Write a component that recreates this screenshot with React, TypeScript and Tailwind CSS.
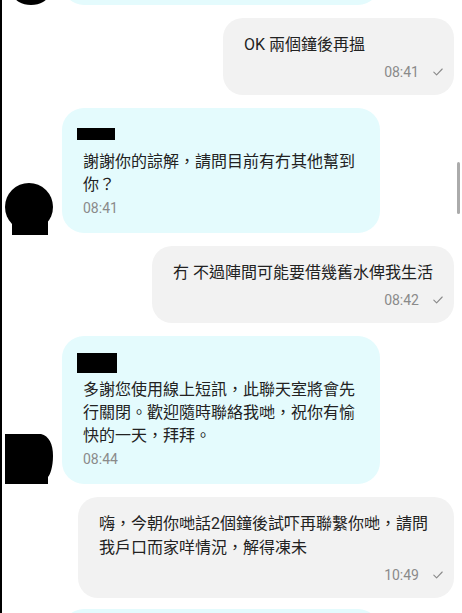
import React from 'react'

const font = "font-['Roboto','Noto_Sans_CJK_TC',sans-serif]"

function Check() {
  return (
    <svg width="10" height="8" viewBox="0 0 10 8" fill="none">
      <polyline points="0.8,4.2 3.6,6.9 9.2,1" stroke="#8a8a8a" strokeWidth="1.1" strokeLinecap="round" strokeLinejoin="round" />
    </svg>
  )
}

function Outgoing({ text, time }: { text: string; time: string }) {
  return (
    <div className="mr-[8px] min-w-[231px] max-w-[376px] self-end rounded-[20px] bg-[#f2f2f2] px-[21px] pt-[15px] pb-[14px]">
      <p className="text-[16px] leading-[24px] text-[#222]">{text}</p>
      <div className="-mr-[10px] mt-[6px] flex h-[18px] items-center justify-end gap-[14px]">
        <span className="text-[14px] text-[#8a8a8a]">{time}</span>
        <Check />
      </div>
    </div>
  )
}

function Incoming({
  lines,
  time,
  avatar,
  name,
}: {
  lines: string
  time: string
  avatar: React.ReactNode
  name: React.ReactNode
}) {
  return (
    <div className="flex items-end gap-[9px] pl-[3px]">
      {avatar}
      <div className="w-[318px] rounded-[22px] bg-[#e4fbfd] px-[21px] pt-[17px] pb-[16px]">
        <div className="mb-[3px] h-[22px]">{name}</div>
        <p className="text-[16px] leading-[23px] text-[#222]">{lines}</p>
        <div className="mt-[3px] flex h-[18px] items-center text-[14px] text-[#8a8a8a]">{time}</div>
      </div>
    </div>
  )
}

export default function App() {
  return (
    <div className={`relative h-[613px] overflow-hidden border-l-[2px] border-black bg-white ${font}`}>
      <div className="flex flex-col gap-[13px]">
        {/* cut-off message at the top */}
        <div className="-mt-[95px] flex items-end gap-[9px] pl-[3px]">
          <svg width="48" height="20" viewBox="0 0 48 20" className="shrink-0">
            <ellipse cx="26" cy="10" rx="17" ry="10" fill="#000" />
          </svg>
          <div className="h-[100px] w-[318px] rounded-[22px] bg-[#e4fbfd]" />
        </div>

        <Outgoing text="OK 兩個鐘後再搵" time="08:41" />

        <Incoming
          lines="謝謝你的諒解，請問目前有冇其他幫到你？"
          time="08:41"
          name={<div className="-ml-[6px] h-[12px] w-[38px] translate-y-[3px] bg-black" />}
          avatar={
            <svg width="48" height="52" viewBox="0 0 48 52" className="-mb-[2px] shrink-0">
              <circle cx="24" cy="24" r="24" fill="#000" />
              <rect x="7" y="30" width="36" height="22" fill="#000" />
            </svg>
          }
        />

        <Outgoing text="冇 不過陣間可能要借幾舊水俾我生活" time="08:42" />

        <Incoming
          lines="多謝您使用線上短訊，此聯天室將會先行關閉。歡迎隨時聯絡我哋，祝你有愉快的一天，拜拜。"
          time="08:44"
          name={<div className="-ml-[6px] h-[20px] w-[40px] bg-black" />}
          avatar={
            <svg width="48" height="50" viewBox="0 0 48 50" className="shrink-0">
              <path d="M0 0 H36 C44 2 48 10 48 22 C48 33 45 41 43 43 V50 H0 Z" fill="#000" />
            </svg>
          }
        />

        <Outgoing text="嗨，今朝你哋話2個鐘後試吓再聯繫你哋，請問我戶口而家咩情況，解得凍未" time="10:49" />

        <div className="-mt-[2px] flex items-end gap-[9px] pl-[3px]">
          <div className="w-[48px] shrink-0" />
          <div className="h-[100px] w-[318px] rounded-[22px] bg-[#e4fbfd]" />
        </div>
      </div>

      {/* scrollbar */}
      <div className="absolute top-[162px] left-[455px] h-[52px] w-[3px] rounded-full bg-[#ababab]" />
    </div>
  )
}
